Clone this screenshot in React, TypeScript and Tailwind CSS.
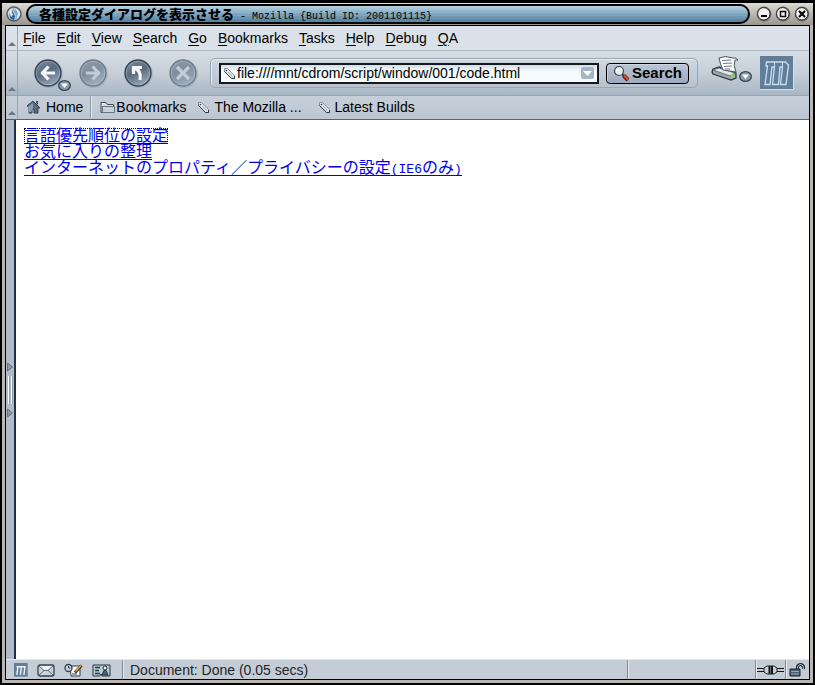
import type { ReactNode } from "react";

const ui = "font-['Liberation_Sans','Noto_Sans_CJK_JP',sans-serif] text-[14px] leading-4 text-black";

const menus = ["File", "Edit", "View", "Search", "Go", "Bookmarks", "Tasks", "Help", "Debug", "QA"];

function Grippy() {
  return (
    <div className="flex w-3 shrink-0 items-end justify-center self-stretch border-r border-[#98a5b1] pb-1">
      <svg width="8" height="4" aria-hidden="true">
        <path d="M0 4 4 0 8 4Z" fill="#697884" />
      </svg>
    </div>
  );
}

function RoundButton({ label, dim, children }: { label: string; dim?: boolean; children: ReactNode }) {
  const id = "g" + label;
  return (
    <button aria-label={label} className="size-[30px] shrink-0">
      <svg width="30" height="30" viewBox="0 0 30 30" aria-hidden="true">
        <defs>
          <linearGradient id={id} x1="0.2" y1="0" x2="0.7" y2="1">
            <stop offset="0" stopColor={dim ? "#8c99a8" : "#77869a"} />
            <stop offset="0.45" stopColor={dim ? "#7f8e9f" : "#5b6b7e"} />
            <stop offset="1" stopColor={dim ? "#a3b1c0" : "#9babbc"} />
          </linearGradient>
        </defs>
        <circle cx="16" cy="16" r="14" fill="#8494a5" opacity=".3" />
        <circle cx="15" cy="15" r="13" fill={"url(#" + id + ")"} stroke={dim ? "#6f7d8d" : "#364453"} strokeWidth="1.4" />
        <circle cx="15" cy="15" r="11.7" fill="none" stroke="#c0cad5" strokeWidth="1" opacity=".4" />
        <g fill="none" stroke={dim ? "#c3ccd6" : "#f5f8fa"} strokeWidth="3.2">{children}</g>
      </svg>
    </button>
  );
}

function DropDot({ label }: { label: string }) {
  return (
    <button aria-label={label} className="h-[11px] w-[13px] shrink-0">
      <svg width="13" height="11" viewBox="0 0 13 11" aria-hidden="true">
        <ellipse cx="6.5" cy="5.5" rx="5.8" ry="4.8" fill="#8c9bac" stroke="#35424f" strokeWidth="1.3" />
        <path d="M3 3.5H10L6.5 8Z" fill="#fff" />
      </svg>
    </button>
  );
}

function Tag() {
  return (
    <svg width="13" height="13" viewBox="0 0 13 13" className="shrink-0" aria-hidden="true">
      <path d="M1.5 1.5H4.5L11.5 8.5V11.5H8.5L1.5 4.5Z" fill="#dfe5e9" stroke="#737e88" strokeWidth=".8" />
      <path d="M1.5 4.5 8.5 11.5H11.5V9" fill="none" stroke="#2b333b" />
      <circle cx="3.5" cy="3.5" r=".8" fill="#333" />
      <path d="m5 5 4.500 4.500" stroke="#9aa5b0" />
    </svg>
  );
}

function MozillaM({ size, wide }: { size: number; wide?: boolean }) {
  return (
    <svg width={size} height={size} viewBox="0 0 34 34" className="shrink-0" aria-hidden="true">
      <rect width="34" height="34" fill="#617e99" />
      {wide ? (
        <path d="M6 9H26.500L24 29M9.500 9 7 29M18 9 15.500 29" fill="none" stroke="#eef4f8" strokeWidth="3.5" />
      ) : (
        <>
          <path
            d="M6.500 6H25.500L28.500 9 26 28.500H20.500L22.500 11H20L18.500 28.500H12.500L14.500 11H12L10 28.500H5L7.500 10H6Z"
            fill="#617e99"
            stroke="#c9def2"
            strokeWidth="1.3"
          />
          <path d="M14.500 6V11M22.500 6V11" stroke="#c9def2" />
        </>
      )}
      <path d="M0 33.500H33.500V0" fill="none" stroke="#d4e0eb" />
    </svg>
  );
}

function WindowButton({ label, children }: { label: string; children: ReactNode }) {
  return (
    <button aria-label={label} className="size-4 shrink-0">
      <svg width="16" height="16" viewBox="0 0 16 16" fill="none" aria-hidden="true">
        <circle cx="8" cy="8" r="7.4" fill="#6b6b6b" />
        <circle cx="7.8" cy="7.8" r="6.2" fill="#f2f2f2" stroke="#222" strokeWidth="1" />
        <g stroke="#000" strokeWidth="2">{children}</g>
      </svg>
    </button>
  );
}

function TitleBar() {
  return (
    <header className="flex h-[22px] shrink-0 items-center bg-linear-to-b from-[#dedbd6] to-[#99968c] pr-[3px] pl-1">
      <button aria-label="Window menu" className="mr-1 size-4 shrink-0">
        <svg width="16" height="16" viewBox="0 0 16 16" aria-hidden="true">
          <circle cx="8" cy="8" r="7" fill="#cbd3d9" stroke="#58616a" strokeWidth="1.5" />
          <path d="M8 1 6 6 7 9 5 11 3 7 4 12 8 15 9 10 7 6Z" fill="#2d68a6" />
          <path d="M9 3 12 6 11 12 9 14 10 9 8 6Z" fill="#6faad4" />
          <path d="M5 3 4 7 6 9M11 4 13 8 11 12" fill="none" stroke="#fff" />
        </svg>
      </button>
      <div className="flex h-5 min-w-0 flex-1 items-baseline overflow-hidden rounded-full border-2 border-black bg-[repeating-linear-gradient(0deg,#ffffff12_0px_1px,transparent_1px_3px),linear-gradient(#b8d2df,#82a9c2_45%,#4f7d9d)] pl-[11px] whitespace-pre text-black">
        <h1 className="font-['Liberation_Sans','Noto_Sans_CJK_JP',sans-serif] text-[13px] leading-[17px] font-black">各種設定ダイアログを表示させる</h1>
        <span className="font-['Liberation_Mono','Noto_Sans_CJK_JP',monospace] text-[10px] leading-4"> - Mozilla {"{"}Build ID: 2001101115{"}"}</span>
      </div>
      <div className="ml-[6px] flex gap-[3px]">
        <WindowButton label="Minimize"><path d="M5 10H11" /></WindowButton>
        <WindowButton label="Maximize"><rect x="5.500" y="5.500" width="5" height="5" strokeWidth="1.5" /></WindowButton>
        <WindowButton label="Close"><path d="m5 5 6 6m0-6-6 6" /></WindowButton>
      </div>
    </header>
  );
}

function NavBar() {
  return (
    <div className="flex h-[45px] shrink-0 border-b border-[#98a5b1] bg-linear-to-b from-[#d6dde4] via-[#c6cfd8] to-[#a9b6c3]">
      <Grippy />
      <nav aria-label="Navigation" className="flex shrink-0 items-start pt-[7px] pl-[15px]">
        <div className="relative mr-[15px] flex">
          <RoundButton label="Back"><path d="M8 15H22M15.500 8.500 9.500 15 15.500 21.500" /></RoundButton>
          <div className="absolute top-[22px] left-[25px] flex"><DropDot label="Back history" /></div>
        </div>
        <div className="flex gap-[15px]">
          <RoundButton label="Forward" dim><path d="M8 15H22M14.500 8.500 20.500 15 14.500 21.500" /></RoundButton>
          <RoundButton label="Reload"><path d="M10.500 16V9.500H19M11 10C17 12 18 17 17 22" /></RoundButton>
          <RoundButton label="Stop" dim><path d="m9 9 12 12M21 9 9 21" /></RoundButton>
        </div>
      </nav>
      <form onSubmit={(e) => e.preventDefault()} className="mt-[7px] ml-3 flex h-[30px] min-w-0 flex-1 items-center gap-[7px] rounded-[5px] border border-[#9aa7b5] bg-linear-to-b from-[#d0d8e0] to-[#b7c2ce] px-2 shadow-[inset_1px_1px_#e4eaf0]">
        <div className="flex h-[21px] min-w-0 flex-1 items-center border-2 border-[#15191d] bg-linear-to-b from-[#cfe0eb] to-[#f6fbfc] to-35% pr-[3px] pl-[2px]">
          <Tag />
          <input aria-label="Location" defaultValue="file:////mnt/cdrom/script/window/001/code.html" className="ml-px min-w-0 flex-1 bg-transparent outline-none" />
          <button type="button" aria-label="Show history" className="flex h-3 w-[13px] items-center justify-center rounded-[2px] bg-[#a9b5c4]">
            <svg width="9" height="5" aria-hidden="true"><path d="M0 0H9L4.500 5Z" fill="#fff" /></svg>
          </button>
        </div>
        <button className="flex h-[21px] w-[83px] shrink-0 items-center justify-center gap-[2px] rounded-[4px] border border-black bg-linear-to-b from-[#bbc7d5] to-[#9cabbd] text-[15px] leading-4 font-bold shadow-[inset_1px_1px_#cbd4df]">
          <svg width="17" height="17" viewBox="0 0 17 17" aria-hidden="true">
            <path d="m9 9 2 2" stroke="#333" strokeWidth="2" />
            <path d="m10.500 10.500 4.500 4.500" stroke="#5b1d0b" strokeWidth="4" />
            <path d="m11 10.500 4 4" stroke="#da5426" strokeWidth="2" />
            <circle cx="6" cy="6" r="4.5" fill="#e5edf4" stroke="#39444e" strokeWidth="1.2" />
            <path d="M3.500 6A2.500 2.500 0 0 1 6 3.500" fill="none" stroke="#fff" strokeWidth="1.5" />
          </svg>
          Search
        </button>
      </form>
      <div className="flex shrink-0 items-start pt-[5px] pr-[15px] pl-[13px]">
        <button aria-label="Print" className="h-7 w-7">
          <svg width="28" height="28" viewBox="0 0 28 28" aria-hidden="true">
            <path d="M2 13 8 11 25 17 25 22 20 24 2 18 1 16Z" fill="#9ca6ae" stroke="#303941" strokeWidth="1.3" />
            <path d="M2 14 8 12 24 17 19 20Z" fill="#e1e6e9" stroke="#56616a" strokeWidth=".8" />
            <path d="M8 2Q14-1 22 2 25 1 27 4H24Q22 9 25 16L12 14Q9 8 8 2Z" fill="#fafafa" stroke="#4a535b" />
            <path d="M11 4.500 20 4M12 7.500 21 7M13 10.500 21 10M14 13 19 13" stroke="#737b82" strokeWidth="1" />
            <path d="m20 20.500 3-1" stroke="#7be633" strokeWidth="3" />
          </svg>
        </button>
        <div className="mt-[15px] flex"><DropDot label="Print options" /></div>
        <a href="#home" aria-label="Mozilla" className="ml-[8px] block"><MozillaM size={34} /></a>
      </div>
    </div>
  );
}

function PersonalBar() {
  return (
    <div className="flex h-6 shrink-0 border-b border-[#566370] bg-linear-to-b from-[#c7d0d9] to-[#bcc6d2]">
      <Grippy />
      <div className="flex items-center pb-px">
        <button className="flex h-full items-center gap-[5px] border-r border-[#8d9aa7] pr-[7px] pl-2 shadow-[1px_0_#e3e8ed]">
          <svg width="15" height="14" viewBox="0 0 15 14" aria-hidden="true">
            <path d="M1 6 7 1 14 8H12V13H8V9H6V13H3V7Z" fill="#546979" stroke="#344756" />
            <path d="M2 7 7 3V8L5 12H3Z" fill="#8ba0ae" />
            <path d="M10 1H12V5L10 3Z" fill="#37505f" />
          </svg>
          Home
        </button>
        <button className="ml-[9px] flex items-center gap-px">
          <svg width="15" height="14" viewBox="0 0 15 14" aria-hidden="true">
            <path d="M1 12.500V2.500H6L7.500 4.500H13.500V12.500Z" fill="#d5dde5" stroke="#3c4853" />
            <path d="M2.500 12V6.500H14.500V12.500H2" fill="#c8d2dc" stroke="#687580" />
            <path d="M2 3.500H5" stroke="#fff" />
          </svg>
          Bookmarks
        </button>
        <a href="#mozilla" className="ml-[11px] flex items-center gap-[4px]"><Tag />The Mozilla ...</a>
        <a href="#builds" className="ml-4 flex items-center gap-[4px]"><Tag />Latest Builds</a>
      </div>
    </div>
  );
}

function SideHandle() {
  return (
    <button aria-label="Open sidebar" className="flex w-[10px] shrink-0 flex-col items-center justify-center gap-1 border-r-2 border-[#26303a] bg-[#aebccb]">
      <svg width="6" height="10" aria-hidden="true"><path d="M.5 1 5.500 5 .5 9Z" fill="#8999a9" stroke="#5e6e7e" /></svg>
      <span className="flex h-7 gap-px">
        <span className="w-[2px] border-r border-[#8b9bab] bg-white" />
        <span className="w-[2px] border-r border-[#8b9bab] bg-white" />
      </span>
      <svg width="6" height="10" aria-hidden="true"><path d="M.5 1 5.500 5 .5 9Z" fill="#8999a9" stroke="#5e6e7e" /></svg>
    </button>
  );
}

const linkClass = "block h-4 w-fit border-b border-[#0000ee] whitespace-nowrap text-[#0000ee]";
const latin = "text-[13px]";

function StatusBar() {
  return (
    <footer className="flex h-5 shrink-0 items-stretch border-t border-[#e5e9ed] bg-[#c4ccd5]">
      <div className="flex w-[117px] shrink-0 items-center gap-[9px] border-r border-[#7c8d9a] pt-px pl-2">
        <button aria-label="Navigator"><MozillaM size={14} wide /></button>
        <button aria-label="Mail">
          <svg width="18" height="13" viewBox="0 0 18 13" aria-hidden="true">
            <rect x="1" y="1" width="16" height="11" rx="2" fill="#c9d4dc" stroke="#34414c" strokeWidth="1.3" />
            <path d="M2 2H16L9 7Z" fill="#eef2f4" />
            <path d="m2 2 5 4.500H11L16 2M2 11l5-4.500m9 4.500-5-4.500" fill="none" stroke="#5c6974" />
          </svg>
        </button>
        <button aria-label="Composer">
          <svg width="19" height="14" viewBox="0 0 19 14" aria-hidden="true">
            <path d="M6 3H16V13H7Z" fill="#f4f6f7" stroke="#333f49" />
            <circle cx="4.5" cy="5" r="3.5" fill="#ccd5dd" stroke="#34414c" strokeWidth="1.3" />
            <path d="M4.500 3V5H6.500M8 11H13" fill="none" stroke="#34414c" />
            <path d="m11 9.500 6.500-7" stroke="#3a281b" strokeWidth="3" />
            <path d="m11.500 8.500 5.500-6" stroke="#eaa94c" strokeWidth="1.5" />
          </svg>
        </button>
        <button aria-label="Address book">
          <svg width="19" height="13" viewBox="0 0 19 13" aria-hidden="true">
            <path d="M1 1H18V12H10L9 10 8 12H1Z" fill="#b5cbd2" stroke="#26343e" />
            <path d="M3 3.500H8M3 6.500H7M3 9.500H8" stroke="#263d47" strokeWidth="1.3" />
            <circle cx="13" cy="4" r="2" fill="#f3f5f6" stroke="#26343e" />
            <path d="m10 11 2-4.500H14L16 11Z" fill="#45636e" stroke="#26343e" />
          </svg>
        </button>
      </div>
      <output className="flex min-w-0 flex-1 items-center border-l border-[#e5e9ed] pl-[6px] text-[#1f2429]">Document: Done (0.05 secs)</output>
      <div className="w-32 shrink-0 border-l border-[#7c8d9a] shadow-[inset_1px_0_#e5e9ed]" />
      <div className="flex w-[30px] shrink-0 items-center justify-center border-l border-[#7c8d9a] shadow-[inset_1px_0_#e5e9ed]">
        <svg width="27" height="10" viewBox="0 0 27 10" role="img" aria-label="Online">
          <path d="M0 3.500H8M0 6.500H8M19 3.500H27M19 6.500H27" stroke="#151515" />
          <path d="M7 3 10 1H17L20 3V7L17 9H10L7 7Z" fill="#c7d0d8" stroke="#222" />
          <path d="M12.500 1V9M15 1V9" stroke="#111" strokeWidth="2" />
        </svg>
      </div>
      <div className="flex w-6 shrink-0 items-center justify-center border-l border-[#7c8d9a] shadow-[inset_1px_0_#e5e9ed]">
        <svg width="17" height="14" viewBox="0 0 17 14" role="img" aria-label="Not secure">
          <path d="M8.500 6V4Q9 1.500 12 1.500 15 2 14.500 6" fill="none" stroke="#17232c" strokeWidth="3" />
          <path d="M8.500 6V4Q9 1.500 12 1.500 15 2 14.500 6" fill="none" stroke="#b6c7d1" />
          <path d="M1 6H11V13H1Z" fill="#4b6372" stroke="#17232c" />
          <path d="M2 8.500H10M2 11H10" stroke="#90a5b1" />
        </svg>
      </div>
    </footer>
  );
}

export default function App() {
  return (
    <div className={ui + " flex h-screen flex-col border-t-[3px] border-x-2 border-b-2 border-black bg-[#b9b6b3]"}>
      <TitleBar />
      <div className="mx-[3px] mb-[3px] flex min-h-0 flex-1 flex-col border border-black bg-[#d7dde3]">
        <div className="flex h-[25px] shrink-0 border-b border-[#abb6c1] bg-[#dbe1e8]">
          <Grippy />
          <nav aria-label="Menu" className="flex items-center gap-[11px] pl-[5px]">
            {menus.map((menu) => (
              <button key={menu}>
                <span className="underline underline-offset-2">{menu[0]}</span>
                {menu.slice(1)}
              </button>
            ))}
          </nav>
        </div>
        <NavBar />
        <PersonalBar />
        <div className="flex min-h-0 flex-1 bg-white">
          <SideHandle />
          <main className="min-w-0 flex-1 p-2 font-['Liberation_Mono','Noto_Sans_CJK_JP',monospace] text-[16px] leading-[19px]">
            <a href="#language" className={linkClass + " outline-1 -outline-offset-1 outline-dotted outline-black"}>言語優先順位の設定</a>
            <a href="#favorites" className={linkClass}>お気に入りの整理</a>
            <a href="#privacy" className={linkClass}>
              インターネットのプロパティ／プライバシーの設定<span className={latin}>(IE6</span>のみ<span className={latin}>)</span>
            </a>
          </main>
        </div>
        <StatusBar />
      </div>
    </div>
  );
}
